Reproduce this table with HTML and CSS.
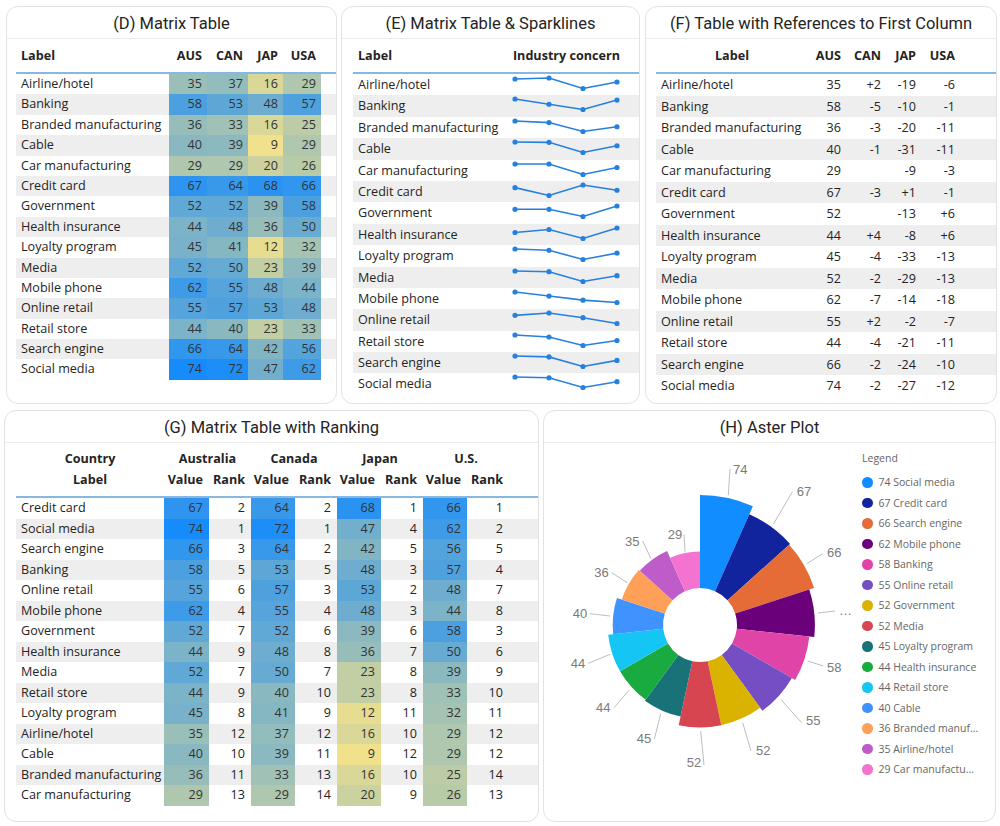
FILE: index.html
```html
<!DOCTYPE html>
<html>
<head>
<meta charset="utf-8">
<link rel="stylesheet" href="styles.css">
</head>
<body>
<div class="page">
  <div class="row row1">
    <section class="panel pD">
      <h2 class="ptitle">(D) Matrix Table</h2>
      <div class="tbl tD">
        <div class="hdr"><div class="lbl">Label</div><div class="c">AUS</div><div class="c">CAN</div><div class="c">JAP</div><div class="c">USA</div></div>
        <div class="r"><div class="lbl">Airline/hotel</div><div class="c hm" style="--v:35">35</div><div class="c hm" style="--v:37">37</div><div class="c hm" style="--v:16">16</div><div class="c hm" style="--v:29">29</div></div>
        <div class="r alt"><div class="lbl">Banking</div><div class="c hm" style="--v:58">58</div><div class="c hm" style="--v:53">53</div><div class="c hm" style="--v:48">48</div><div class="c hm" style="--v:57">57</div></div>
        <div class="r"><div class="lbl">Branded manufacturing</div><div class="c hm" style="--v:36">36</div><div class="c hm" style="--v:33">33</div><div class="c hm" style="--v:16">16</div><div class="c hm" style="--v:25">25</div></div>
        <div class="r alt"><div class="lbl">Cable</div><div class="c hm" style="--v:40">40</div><div class="c hm" style="--v:39">39</div><div class="c hm" style="--v:9">9</div><div class="c hm" style="--v:29">29</div></div>
        <div class="r"><div class="lbl">Car manufacturing</div><div class="c hm" style="--v:29">29</div><div class="c hm" style="--v:29">29</div><div class="c hm" style="--v:20">20</div><div class="c hm" style="--v:26">26</div></div>
        <div class="r alt"><div class="lbl">Credit card</div><div class="c hm" style="--v:67">67</div><div class="c hm" style="--v:64">64</div><div class="c hm" style="--v:68">68</div><div class="c hm" style="--v:66">66</div></div>
        <div class="r"><div class="lbl">Government</div><div class="c hm" style="--v:52">52</div><div class="c hm" style="--v:52">52</div><div class="c hm" style="--v:39">39</div><div class="c hm" style="--v:58">58</div></div>
        <div class="r alt"><div class="lbl">Health insurance</div><div class="c hm" style="--v:44">44</div><div class="c hm" style="--v:48">48</div><div class="c hm" style="--v:36">36</div><div class="c hm" style="--v:50">50</div></div>
        <div class="r"><div class="lbl">Loyalty program</div><div class="c hm" style="--v:45">45</div><div class="c hm" style="--v:41">41</div><div class="c hm" style="--v:12">12</div><div class="c hm" style="--v:32">32</div></div>
        <div class="r alt"><div class="lbl">Media</div><div class="c hm" style="--v:52">52</div><div class="c hm" style="--v:50">50</div><div class="c hm" style="--v:23">23</div><div class="c hm" style="--v:39">39</div></div>
        <div class="r"><div class="lbl">Mobile phone</div><div class="c hm" style="--v:62">62</div><div class="c hm" style="--v:55">55</div><div class="c hm" style="--v:48">48</div><div class="c hm" style="--v:44">44</div></div>
        <div class="r alt"><div class="lbl">Online retail</div><div class="c hm" style="--v:55">55</div><div class="c hm" style="--v:57">57</div><div class="c hm" style="--v:53">53</div><div class="c hm" style="--v:48">48</div></div>
        <div class="r"><div class="lbl">Retail store</div><div class="c hm" style="--v:44">44</div><div class="c hm" style="--v:40">40</div><div class="c hm" style="--v:23">23</div><div class="c hm" style="--v:33">33</div></div>
        <div class="r alt"><div class="lbl">Search engine</div><div class="c hm" style="--v:66">66</div><div class="c hm" style="--v:64">64</div><div class="c hm" style="--v:42">42</div><div class="c hm" style="--v:56">56</div></div>
        <div class="r"><div class="lbl">Social media</div><div class="c hm" style="--v:74">74</div><div class="c hm" style="--v:72">72</div><div class="c hm" style="--v:47">47</div><div class="c hm" style="--v:62">62</div></div>
      </div>
    </section>

    <section class="panel pE">
      <h2 class="ptitle">(E) Matrix Table &amp; Sparklines</h2>
      <div class="tbl tE">
        <div class="hdr"><div class="lbl">Label</div><div class="c">Industry concern</div></div>
        <div class="r"><div class="lbl">Airline/hotel</div><svg class="spark" viewBox="0 0 120 21.4"><polyline points="10,5 44,4 78,14.5 112,8"/><circle cx="10" cy="5" r="2.6"/><circle cx="44" cy="4" r="2.6"/><circle cx="78" cy="14.5" r="2.6"/><circle cx="112" cy="8" r="2.6"/></svg></div>
        <div class="r alt"><div class="lbl">Banking</div><svg class="spark" viewBox="0 0 120 21.4"><polyline points="10,4 44,9.25 78,14.5 112,5.05"/><circle cx="10" cy="4" r="2.6"/><circle cx="44" cy="9.25" r="2.6"/><circle cx="78" cy="14.5" r="2.6"/><circle cx="112" cy="5.05" r="2.6"/></svg></div>
        <div class="r"><div class="lbl">Branded manufacturing</div><svg class="spark" viewBox="0 0 120 21.4"><polyline points="10,4 44,5.58 78,14.5 112,9.78"/><circle cx="10" cy="4" r="2.6"/><circle cx="44" cy="5.58" r="2.6"/><circle cx="78" cy="14.5" r="2.6"/><circle cx="112" cy="9.78" r="2.6"/></svg></div>
        <div class="r alt"><div class="lbl">Cable</div><svg class="spark" viewBox="0 0 120 21.4"><polyline points="10,4 44,4.34 78,14.5 112,7.73"/><circle cx="10" cy="4" r="2.6"/><circle cx="44" cy="4.34" r="2.6"/><circle cx="78" cy="14.5" r="2.6"/><circle cx="112" cy="7.73" r="2.6"/></svg></div>
        <div class="r"><div class="lbl">Car manufacturing</div><svg class="spark" viewBox="0 0 120 21.4"><polyline points="10,4 44,4 78,14.5 112,7.5"/><circle cx="10" cy="4" r="2.6"/><circle cx="44" cy="4" r="2.6"/><circle cx="78" cy="14.5" r="2.6"/><circle cx="112" cy="7.5" r="2.6"/></svg></div>
        <div class="r alt"><div class="lbl">Credit card</div><svg class="spark" viewBox="0 0 120 21.4"><polyline points="10,6.63 44,14.5 78,4 112,9.25"/><circle cx="10" cy="6.63" r="2.6"/><circle cx="44" cy="14.5" r="2.6"/><circle cx="78" cy="4" r="2.6"/><circle cx="112" cy="9.25" r="2.6"/></svg></div>
        <div class="r"><div class="lbl">Government</div><svg class="spark" viewBox="0 0 120 21.4"><polyline points="10,7.32 44,7.32 78,14.5 112,4"/><circle cx="10" cy="7.32" r="2.6"/><circle cx="44" cy="7.32" r="2.6"/><circle cx="78" cy="14.5" r="2.6"/><circle cx="112" cy="4" r="2.6"/></svg></div>
        <div class="r alt"><div class="lbl">Health insurance</div><svg class="spark" viewBox="0 0 120 21.4"><polyline points="10,8.5 44,5.5 78,14.5 112,4"/><circle cx="10" cy="8.5" r="2.6"/><circle cx="44" cy="5.5" r="2.6"/><circle cx="78" cy="14.5" r="2.6"/><circle cx="112" cy="4" r="2.6"/></svg></div>
        <div class="r"><div class="lbl">Loyalty program</div><svg class="spark" viewBox="0 0 120 21.4"><polyline points="10,4 44,5.27 78,14.5 112,8.14"/><circle cx="10" cy="4" r="2.6"/><circle cx="44" cy="5.27" r="2.6"/><circle cx="78" cy="14.5" r="2.6"/><circle cx="112" cy="8.14" r="2.6"/></svg></div>
        <div class="r alt"><div class="lbl">Media</div><svg class="spark" viewBox="0 0 120 21.4"><polyline points="10,4 44,4.72 78,14.5 112,8.71"/><circle cx="10" cy="4" r="2.6"/><circle cx="44" cy="4.72" r="2.6"/><circle cx="78" cy="14.5" r="2.6"/><circle cx="112" cy="8.71" r="2.6"/></svg></div>
        <div class="r"><div class="lbl">Mobile phone</div><svg class="spark" viewBox="0 0 120 21.4"><polyline points="10,4 44,8.08 78,12.17 112,14.5"/><circle cx="10" cy="4" r="2.6"/><circle cx="44" cy="8.08" r="2.6"/><circle cx="78" cy="12.17" r="2.6"/><circle cx="112" cy="14.5" r="2.6"/></svg></div>
        <div class="r alt"><div class="lbl">Online retail</div><svg class="spark" viewBox="0 0 120 21.4"><polyline points="10,6.33 44,4 78,8.67 112,14.5"/><circle cx="10" cy="6.33" r="2.6"/><circle cx="44" cy="4" r="2.6"/><circle cx="78" cy="8.67" r="2.6"/><circle cx="112" cy="14.5" r="2.6"/></svg></div>
        <div class="r"><div class="lbl">Retail store</div><svg class="spark" viewBox="0 0 120 21.4"><polyline points="10,4 44,6 78,14.5 112,9.5"/><circle cx="10" cy="4" r="2.6"/><circle cx="44" cy="6" r="2.6"/><circle cx="78" cy="14.5" r="2.6"/><circle cx="112" cy="9.5" r="2.6"/></svg></div>
        <div class="r alt"><div class="lbl">Search engine</div><svg class="spark" viewBox="0 0 120 21.4"><polyline points="10,4 44,4.88 78,14.5 112,8.38"/><circle cx="10" cy="4" r="2.6"/><circle cx="44" cy="4.88" r="2.6"/><circle cx="78" cy="14.5" r="2.6"/><circle cx="112" cy="8.38" r="2.6"/></svg></div>
        <div class="r"><div class="lbl">Social media</div><svg class="spark" viewBox="0 0 120 21.4"><polyline points="10,4 44,4.78 78,14.5 112,8.67"/><circle cx="10" cy="4" r="2.6"/><circle cx="44" cy="4.78" r="2.6"/><circle cx="78" cy="14.5" r="2.6"/><circle cx="112" cy="8.67" r="2.6"/></svg></div>
      </div>
    </section>

    <section class="panel pF">
      <h2 class="ptitle">(F) Table with References to First Column</h2>
      <div class="tbl tF">
        <div class="hdr"><div class="lbl ctr">Label</div><div class="c">AUS</div><div class="c">CAN</div><div class="c">JAP</div><div class="c">USA</div></div>
        <div class="r"><div class="lbl">Airline/hotel</div><div class="c">35</div><div class="c">+2</div><div class="c">-19</div><div class="c">-6</div></div>
        <div class="r alt"><div class="lbl">Banking</div><div class="c">58</div><div class="c">-5</div><div class="c">-10</div><div class="c">-1</div></div>
        <div class="r"><div class="lbl">Branded manufacturing</div><div class="c">36</div><div class="c">-3</div><div class="c">-20</div><div class="c">-11</div></div>
        <div class="r alt"><div class="lbl">Cable</div><div class="c">40</div><div class="c">-1</div><div class="c">-31</div><div class="c">-11</div></div>
        <div class="r"><div class="lbl">Car manufacturing</div><div class="c">29</div><div class="c"></div><div class="c">-9</div><div class="c">-3</div></div>
        <div class="r alt"><div class="lbl">Credit card</div><div class="c">67</div><div class="c">-3</div><div class="c">+1</div><div class="c">-1</div></div>
        <div class="r"><div class="lbl">Government</div><div class="c">52</div><div class="c"></div><div class="c">-13</div><div class="c">+6</div></div>
        <div class="r alt"><div class="lbl">Health insurance</div><div class="c">44</div><div class="c">+4</div><div class="c">-8</div><div class="c">+6</div></div>
        <div class="r"><div class="lbl">Loyalty program</div><div class="c">45</div><div class="c">-4</div><div class="c">-33</div><div class="c">-13</div></div>
        <div class="r alt"><div class="lbl">Media</div><div class="c">52</div><div class="c">-2</div><div class="c">-29</div><div class="c">-13</div></div>
        <div class="r"><div class="lbl">Mobile phone</div><div class="c">62</div><div class="c">-7</div><div class="c">-14</div><div class="c">-18</div></div>
        <div class="r alt"><div class="lbl">Online retail</div><div class="c">55</div><div class="c">+2</div><div class="c">-2</div><div class="c">-7</div></div>
        <div class="r"><div class="lbl">Retail store</div><div class="c">44</div><div class="c">-4</div><div class="c">-21</div><div class="c">-11</div></div>
        <div class="r alt"><div class="lbl">Search engine</div><div class="c">66</div><div class="c">-2</div><div class="c">-24</div><div class="c">-10</div></div>
        <div class="r"><div class="lbl">Social media</div><div class="c">74</div><div class="c">-2</div><div class="c">-27</div><div class="c">-12</div></div>
      </div>
    </section>
  </div>

  <div class="row row2">
    <section class="panel pG">
      <h2 class="ptitle">(G) Matrix Table with Ranking</h2>
      <div class="tbl tG">
        <div class="hdr2">
          <div class="ctr">Country</div><div class="ctr grp">Australia</div><div class="ctr grp">Canada</div><div class="ctr grp">Japan</div><div class="ctr grp">U.S.</div>
          <div class="ctr">Label</div><div class="c">Value</div><div class="c">Rank</div><div class="c">Value</div><div class="c">Rank</div><div class="c">Value</div><div class="c">Rank</div><div class="c">Value</div><div class="c">Rank</div>
        </div>
        <div class="r"><div class="lbl">Credit card</div><div class="c hm" style="--v:67">67</div><div class="c">2</div><div class="c hm" style="--v:64">64</div><div class="c">2</div><div class="c hm" style="--v:68">68</div><div class="c">1</div><div class="c hm" style="--v:66">66</div><div class="c">1</div></div>
        <div class="r alt"><div class="lbl">Social media</div><div class="c hm" style="--v:74">74</div><div class="c">1</div><div class="c hm" style="--v:72">72</div><div class="c">1</div><div class="c hm" style="--v:47">47</div><div class="c">4</div><div class="c hm" style="--v:62">62</div><div class="c">2</div></div>
        <div class="r"><div class="lbl">Search engine</div><div class="c hm" style="--v:66">66</div><div class="c">3</div><div class="c hm" style="--v:64">64</div><div class="c">2</div><div class="c hm" style="--v:42">42</div><div class="c">5</div><div class="c hm" style="--v:56">56</div><div class="c">5</div></div>
        <div class="r alt"><div class="lbl">Banking</div><div class="c hm" style="--v:58">58</div><div class="c">5</div><div class="c hm" style="--v:53">53</div><div class="c">5</div><div class="c hm" style="--v:48">48</div><div class="c">3</div><div class="c hm" style="--v:57">57</div><div class="c">4</div></div>
        <div class="r"><div class="lbl">Online retail</div><div class="c hm" style="--v:55">55</div><div class="c">6</div><div class="c hm" style="--v:57">57</div><div class="c">3</div><div class="c hm" style="--v:53">53</div><div class="c">2</div><div class="c hm" style="--v:48">48</div><div class="c">7</div></div>
        <div class="r alt"><div class="lbl">Mobile phone</div><div class="c hm" style="--v:62">62</div><div class="c">4</div><div class="c hm" style="--v:55">55</div><div class="c">4</div><div class="c hm" style="--v:48">48</div><div class="c">3</div><div class="c hm" style="--v:44">44</div><div class="c">8</div></div>
        <div class="r"><div class="lbl">Government</div><div class="c hm" style="--v:52">52</div><div class="c">7</div><div class="c hm" style="--v:52">52</div><div class="c">6</div><div class="c hm" style="--v:39">39</div><div class="c">6</div><div class="c hm" style="--v:58">58</div><div class="c">3</div></div>
        <div class="r alt"><div class="lbl">Health insurance</div><div class="c hm" style="--v:44">44</div><div class="c">9</div><div class="c hm" style="--v:48">48</div><div class="c">8</div><div class="c hm" style="--v:36">36</div><div class="c">7</div><div class="c hm" style="--v:50">50</div><div class="c">6</div></div>
        <div class="r"><div class="lbl">Media</div><div class="c hm" style="--v:52">52</div><div class="c">7</div><div class="c hm" style="--v:50">50</div><div class="c">7</div><div class="c hm" style="--v:23">23</div><div class="c">8</div><div class="c hm" style="--v:39">39</div><div class="c">9</div></div>
        <div class="r alt"><div class="lbl">Retail store</div><div class="c hm" style="--v:44">44</div><div class="c">9</div><div class="c hm" style="--v:40">40</div><div class="c">10</div><div class="c hm" style="--v:23">23</div><div class="c">8</div><div class="c hm" style="--v:33">33</div><div class="c">10</div></div>
        <div class="r"><div class="lbl">Loyalty program</div><div class="c hm" style="--v:45">45</div><div class="c">8</div><div class="c hm" style="--v:41">41</div><div class="c">9</div><div class="c hm" style="--v:12">12</div><div class="c">11</div><div class="c hm" style="--v:32">32</div><div class="c">11</div></div>
        <div class="r alt"><div class="lbl">Airline/hotel</div><div class="c hm" style="--v:35">35</div><div class="c">12</div><div class="c hm" style="--v:37">37</div><div class="c">12</div><div class="c hm" style="--v:16">16</div><div class="c">10</div><div class="c hm" style="--v:29">29</div><div class="c">12</div></div>
        <div class="r"><div class="lbl">Cable</div><div class="c hm" style="--v:40">40</div><div class="c">10</div><div class="c hm" style="--v:39">39</div><div class="c">11</div><div class="c hm" style="--v:9">9</div><div class="c">12</div><div class="c hm" style="--v:29">29</div><div class="c">12</div></div>
        <div class="r alt"><div class="lbl">Branded manufacturing</div><div class="c hm" style="--v:36">36</div><div class="c">11</div><div class="c hm" style="--v:33">33</div><div class="c">13</div><div class="c hm" style="--v:16">16</div><div class="c">10</div><div class="c hm" style="--v:25">25</div><div class="c">14</div></div>
        <div class="r"><div class="lbl">Car manufacturing</div><div class="c hm" style="--v:29">29</div><div class="c">13</div><div class="c hm" style="--v:29">29</div><div class="c">14</div><div class="c hm" style="--v:20">20</div><div class="c">9</div><div class="c hm" style="--v:26">26</div><div class="c">13</div></div>
      </div>
    </section>

    <section class="panel pH">
      <h2 class="ptitle">(H) Aster Plot</h2>
      <div class="hbody">
        <svg class="aster" width="310" height="370" viewBox="0 0 310 370">
          <g transform="translate(156,182)">
            <path fill="#118DFF" d="M0,-37 L0,-130 A130,130 0 0 1 52.88,-118.76 L15.05,-33.80 A37,37 0 0 0 0,-37Z"/>
            <path fill="#12239E" d="M15.05,-33.80 L49.30,-110.72 A121.2,121.2 0 0 1 90.07,-81.10 L27.50,-24.76 A37,37 0 0 0 15.05,-33.80Z"/>
            <path fill="#E66C37" d="M27.50,-24.76 L89.18,-80.30 A120,120 0 0 1 114.13,-37.08 L35.19,-11.43 A37,37 0 0 0 27.50,-24.76Z"/>
            <path fill="#6B007B" d="M35.19,-11.43 L109.28,-35.51 A114.9,114.9 0 0 1 114.27,12.01 L36.80,3.87 A37,37 0 0 0 35.19,-11.43Z"/>
            <path fill="#E044A7" d="M36.80,3.87 L109.30,11.49 A109.9,109.9 0 0 1 95.18,54.95 L32.04,18.5 A37,37 0 0 0 36.80,3.87Z"/>
            <path fill="#744EC2" d="M32.04,18.5 L91.89,53.05 A106.1,106.1 0 0 1 62.36,85.84 L21.75,29.93 A37,37 0 0 0 32.04,18.5Z"/>
            <path fill="#D9B300" d="M21.75,29.93 L60.19,82.84 A102.4,102.4 0 0 1 21.29,100.16 L7.69,36.19 A37,37 0 0 0 21.75,29.93Z"/>
            <path fill="#D64550" d="M7.69,36.19 L21.29,100.16 A102.4,102.4 0 0 1 -21.29,100.16 L-7.69,36.19 A37,37 0 0 0 7.69,36.19Z"/>
            <path fill="#197278" d="M-7.69,36.19 L-19.46,91.56 A93.6,93.6 0 0 1 -55.02,75.72 L-21.75,29.93 A37,37 0 0 0 -7.69,36.19Z"/>
            <path fill="#1AAB40" d="M-21.75,29.93 L-54.25,74.67 A92.3,92.3 0 0 1 -79.93,46.15 L-32.04,18.5 A37,37 0 0 0 -21.75,29.93Z"/>
            <path fill="#15C6F4" d="M-32.04,18.5 L-79.93,46.15 A92.3,92.3 0 0 1 -91.79,9.65 L-36.80,3.87 A37,37 0 0 0 -32.04,18.5Z"/>
            <path fill="#4092FF" d="M-36.80,3.87 L-86.82,9.13 A87.3,87.3 0 0 1 -83.03,-26.98 L-35.19,-11.43 A37,37 0 0 0 -36.80,3.87Z"/>
            <path fill="#FFA058" d="M-35.19,-11.43 L-78.27,-25.43 A82.3,82.3 0 0 1 -61.16,-55.07 L-27.50,-24.76 A37,37 0 0 0 -35.19,-11.43Z"/>
            <path fill="#BE5DC9" d="M-27.50,-24.76 L-60.19,-54.20 A81,81 0 0 1 -32.95,-74.00 L-15.05,-33.80 A37,37 0 0 0 -27.50,-24.76Z"/>
            <path fill="#F472D0" d="M-15.05,-33.80 L-29.90,-67.15 A73.5,73.5 0 0 1 0,-73.5 L0,-37 A37,37 0 0 0 -15.05,-33.80Z"/>
            <g class="lead">
              <line x1="28.3" y1="-129.7" x2="30" y2="-156.3"/>
              <line x1="73.3" y1="-100.7" x2="92.3" y2="-133"/>
              <line x1="106.7" y1="-61.3" x2="122.7" y2="-71.3"/>
              <line x1="118" y1="-12" x2="135" y2="-14"/>
              <line x1="107.7" y1="36" x2="123.3" y2="41"/>
              <line x1="80.7" y1="74.3" x2="101.7" y2="97.7"/>
              <line x1="42.7" y1="97.7" x2="51" y2="126"/>
              <line x1="0.7" y1="106" x2="4" y2="140"/>
              <line x1="-39.3" y1="88.7" x2="-45.7" y2="114.3"/>
              <line x1="-70.7" y1="65" x2="-86" y2="82.7"/>
              <line x1="-90" y1="29.3" x2="-111.7" y2="38.3"/>
              <line x1="-90" y1="-9" x2="-110" y2="-11.3"/>
              <line x1="-72.7" y1="-42.3" x2="-88.3" y2="-52.3"/>
              <line x1="-49" y1="-66.3" x2="-57.3" y2="-84"/>
              <line x1="-15" y1="-73.3" x2="-16" y2="-90.7"/>
            </g>
            <g class="vlab">
              <text x="33" y="-151.5">74</text>
              <text x="96.7" y="-129">67</text>
              <text x="127" y="-68.3">66</text>
              <text x="139" y="-10">…</text>
              <text x="127" y="47">58</text>
              <text x="106" y="100.3">55</text>
              <text x="56" y="130">52</text>
              <text x="-13.3" y="142">52</text>
              <text x="-63.3" y="118">45</text>
              <text x="-104" y="86.7">44</text>
              <text x="-129.3" y="43.3">44</text>
              <text x="-127.3" y="-7.5">40</text>
              <text x="-105.7" y="-48">36</text>
              <text x="-75" y="-79">35</text>
              <text x="-32.3" y="-85.7">29</text>
            </g>
          </g>
        </svg>
        <div class="legend">
          <div class="lgtitle">Legend</div>
          <div class="li"><span class="dot" style="background:#118DFF"></span>74 Social media</div>
          <div class="li"><span class="dot" style="background:#12239E"></span>67 Credit card</div>
          <div class="li"><span class="dot" style="background:#E66C37"></span>66 Search engine</div>
          <div class="li"><span class="dot" style="background:#6B007B"></span>62 Mobile phone</div>
          <div class="li"><span class="dot" style="background:#E044A7"></span>58 Banking</div>
          <div class="li"><span class="dot" style="background:#744EC2"></span>55 Online retail</div>
          <div class="li"><span class="dot" style="background:#D9B300"></span>52 Government</div>
          <div class="li"><span class="dot" style="background:#D64550"></span>52 Media</div>
          <div class="li"><span class="dot" style="background:#197278"></span>45 Loyalty program</div>
          <div class="li"><span class="dot" style="background:#1AAB40"></span>44 Health insurance</div>
          <div class="li"><span class="dot" style="background:#15C6F4"></span>44 Retail store</div>
          <div class="li"><span class="dot" style="background:#4092FF"></span>40 Cable</div>
          <div class="li"><span class="dot" style="background:#FFA058"></span>36 Branded manuf…</div>
          <div class="li"><span class="dot" style="background:#BE5DC9"></span>35 Airline/hotel</div>
          <div class="li"><span class="dot" style="background:#F472D0"></span>29 Car manufactu…</div>
        </div>
      </div>
    </section>
  </div>
</div>
</body>
</html>
```

FILE: styles.css
```css
* { box-sizing: border-box; }
body {
  margin: 0;
  background: #ffffff;
  font-family: "Open Sans", "Noto Sans", sans-serif;
  font-size: 12.6px;
  color: #252423;
}
.page { padding-top: 6px; }
.row { display: flex; }
.row1 { padding-left: 6px; gap: 4px; height: 398px; }
.row2 { padding-left: 4px; gap: 4px; margin-top: 6px; height: 412px; }

.panel {
  border: 1px solid #e2e2e2;
  border-radius: 12px;
  background: #fff;
  overflow: hidden;
}
.pD { width: 331px; }
.pE { width: 299px; }
.pF { width: 352px; margin-left: 1px; }
.pG { width: 535px; }
.pH { width: 453px; }

.ptitle {
  margin: 0;
  height: 32px;
  padding-top: 2px;
  line-height: 29px;
  border-bottom: 1px solid #ececec;
  text-align: center;
  font-family: Roboto, "DejaVu Sans", sans-serif;
  font-weight: 400;
  font-size: 16.5px;
  color: #252423;
}

.tbl { margin-left: 9px; }
.tE, .tF, .tG { margin-left: 10px; }
.tE { margin-left: 11px; }
.tG { margin-left: 11px; }

.tD .hdr, .tD .r { grid-template-columns: 153px 38px 41px 35px 38px; }
.tE .hdr, .tE .r { grid-template-columns: 152px 120px; }
.tF .hdr, .tF .r { grid-template-columns: 152px 38px 40px 35px 39px; }
.tG .hdr2, .tG .r { grid-template-columns: 148px 45px 42px 44px 42px 44px 42px 44px 42px; }

.hdr {
  display: grid;
  height: 35px;
  align-items: center;
  border-bottom: 2px solid #88b7e2;
  font-weight: 700;
}
.hdr2 {
  display: grid;
  grid-template-rows: 21px 21px;
  align-items: center;
  padding-top: 5px;
  height: 55px;
  border-bottom: 2px solid #88b7e2;
  font-weight: 700;
}
.hdr2 .grp { grid-column: span 2; }

.r {
  display: grid;
  height: 20.4px;
  line-height: 20.4px;
}
.tE .r { height: 21.4px; line-height: 21.4px; }
.tF .r { height: 21.5px; line-height: 21.5px; }
.tG .r { height: 20.5px; line-height: 20.5px; }
.alt { background: #eeeeee; }

.lbl { padding-left: 5px; white-space: nowrap; }
.ctr { text-align: center; padding-left: 0; }
.c { text-align: right; padding-right: 5px; white-space: nowrap; }
.tG .c { padding-right: 6px; }

.hm {
  background: color-mix(in srgb, #168bfb calc((var(--v) - 9) * 100% / 65), #f1e18c);
  color: #333;
}

.spark { width: 120px; height: 21.4px; display: block; }
.spark polyline { fill: none; stroke: #2680e0; stroke-width: 1.6; }
.spark circle { fill: #2680e0; }

.hbody { display: flex; }
.aster { display: block; flex: none; }
.lead line { stroke: #bdbdbd; stroke-width: 1; }
.vlab text {
  font-family: "Liberation Sans", Arial, sans-serif;
  font-size: 13px;
  fill: #7a7a7a;
}
.legend {
  padding-left: 8px;
  padding-top: 7px;
  color: #666;
  font-size: 10.5px;
}
.lgtitle { height: 20px; line-height: 16px; margin-bottom: 2px; }
.li {
  display: flex;
  align-items: center;
  height: 20.5px;
  white-space: nowrap;
}
.dot {
  width: 10.5px;
  height: 10.5px;
  border-radius: 50%;
  margin-right: 6px;
  flex: none;
}
```
